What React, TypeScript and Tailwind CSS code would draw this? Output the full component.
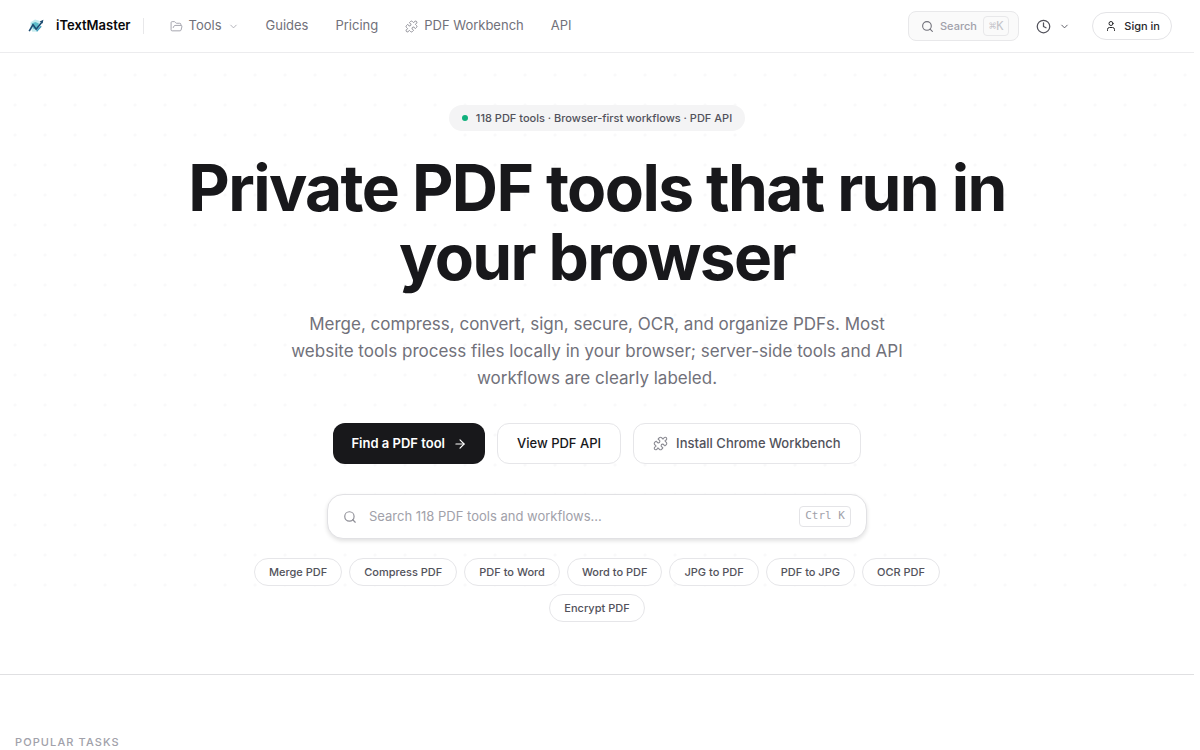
import { ArrowRight, ChevronDown, Clock, FolderOpen, Puzzle, Search, User } from "lucide-react";

const popular = [
  "Merge PDF",
  "Compress PDF",
  "PDF to Word",
  "Word to PDF",
  "JPG to PDF",
  "PDF to JPG",
  "OCR PDF",
  "Encrypt PDF",
];

function Logo() {
  return (
    <svg viewBox="0 0 16 16" className="size-4" aria-hidden="true">
      <path d="M2.6 4.2 7 1.6l4.4 1.2 1 5.6-3 5.2-5 .2-2-4z" fill="#c5ebee" />
      <path d="M3.6 5.4 7.4 4l3.4 1.4-.6 4.4-2.2 1.6-3-1z" fill="#5cbcc9" />
      <path d="M1.2 13.2 5 6.6l3.2 4.6L14 4" fill="none" stroke="#1c4a70" strokeWidth="1.6" strokeLinejoin="round" />
      <path d="m15.4 1.8-3.8 1.8 3 2z" fill="#1c4a70" />
      <path d="m8.6 13.2 4.6-5" stroke="#3a9abb" strokeWidth="1.3" />
    </svg>
  );
}

function Header() {
  return (
    <header className="flex h-[53px] items-center justify-between border-b border-[#ececee] bg-white pl-7 pr-[22px]">
      <div className="flex items-center">
        <a href="#home" className="flex items-center gap-3 text-[13px] font-semibold text-[#09090b]">
          <Logo />
          iTextMaster
        </a>
        <span className="ml-3 h-4 w-px bg-[#e8e8ea]" />
        <nav className="ml-[26px] flex items-center gap-[27px] text-[13px] text-[#71717a]">
          <button type="button" className="flex items-center gap-[6px]">
            <FolderOpen size={13} strokeWidth={1.75} className="text-[#a1a1aa]" />
            Tools
            <ChevronDown size={11} strokeWidth={1.75} className="text-[#a1a1aa]" />
          </button>
          <a href="#guides">Guides</a>
          <a href="#pricing">Pricing</a>
          <a href="#workbench" className="flex items-center gap-[6px]">
            <Puzzle size={13} strokeWidth={1.75} className="text-[#8a8a92]" />
            PDF Workbench
          </a>
          <a href="#api">API</a>
        </nav>
      </div>
      <div className="flex items-center">
        <button
          type="button"
          className="flex h-[30px] items-center gap-[6px] rounded-lg border border-[#e8e8ea] bg-[#fafafa] pl-3 pr-[9px] text-[11px] font-medium text-[#a1a1aa]"
        >
          <Search size={13} className="text-[#71717a]" />
          Search
          <kbd className="flex h-5 items-center rounded border border-[#e8e8ea] px-[5px] font-['DejaVu_Sans_Mono',monospace] text-xs text-[#c4c4c9]">
            ⌘K
          </kbd>
        </button>
        <button type="button" aria-label="Recent" className="ml-[17px] flex items-center gap-2 text-[#52525b]">
          <Clock size={15} />
          <ChevronDown size={11} />
        </button>
        <button
          type="button"
          className="ml-[22px] flex h-7 items-center gap-[7px] rounded-full border border-[#e4e4e7] pl-3 pr-[11px] text-[11px] font-medium text-[#27272a]"
        >
          <User size={12} />
          Sign in
        </button>
      </div>
    </header>
  );
}

function Hero() {
  return (
    <section className="relative border-b border-[#e0e0e2] px-4 pb-[52px] pt-[52px]">
      <div className="absolute inset-x-0 top-[7px] -z-10 h-[540px] bg-[radial-gradient(circle_at_center,#f9f9fa_1px,transparent_2px)] bg-[size:30px_30px]" />
      <div className="flex flex-col items-center">
        <p className="flex h-[26px] items-center gap-2 rounded-full bg-[#f4f4f5] px-[13px] text-[11px] font-medium text-[#52525b]">
          <span className="size-[6px] rounded-full bg-[#10b07c]" />
          118 PDF tools · Browser-first workflows · PDF API
        </p>
        <h1 className="mt-[22px] max-w-[840px] text-center text-[64px] font-bold leading-[69px] tracking-tight text-[#18181b]">
          Private PDF tools that run in your browser
        </h1>
        <p className="mt-5 max-w-[630px] text-center text-[17px] leading-[27px] text-[#71717a]">
          Merge, compress, convert, sign, secure, OCR, and organize PDFs. Most website tools process files locally in
          your browser; server-side tools and API workflows are clearly labeled.
        </p>
        <div className="mt-[31px] flex flex-wrap justify-center gap-3 text-[13px] font-medium">
          <a
            href="#tools"
            className="flex h-[41px] items-center gap-2 rounded-xl bg-[#18181b] px-[18px] font-semibold text-white"
          >
            Find a PDF tool
            <ArrowRight size={14} />
          </a>
          <a
            href="#api"
            className="flex h-[41px] items-center rounded-xl border border-[#e6e6e9] bg-white px-[19px] text-[#18181b]"
          >
            View PDF API
          </a>
          <a
            href="#install"
            className="flex h-[41px] items-center gap-2 rounded-xl border border-[#e6e6e9] bg-white px-[19px] text-[#52525b]"
          >
            <Puzzle size={15} strokeWidth={1.75} className="text-[#8a8a92]" />
            Install Chrome Workbench
          </a>
        </div>
        <label className="mt-[30px] flex h-[45px] w-full max-w-[540px] items-center rounded-2xl border border-[#e1e1e4] bg-white px-[15px] shadow-[0_2px_4px_rgba(0,0,0,0.12)]">
          <Search size={14} className="text-[#8f8f97]" />
          <input
            type="text"
            aria-label="Search PDF tools"
            placeholder="Search 118 PDF tools and workflows..."
            className="ml-[12px] min-w-0 flex-1 text-[13px] outline-none placeholder:text-[#a1a1aa]"
          />
          <kbd className="flex h-[21px] items-center rounded border border-[#e4e4e7] px-[5px] font-['DejaVu_Sans_Mono',monospace] text-[11px] text-[#a1a1aa]">
            Ctrl K
          </kbd>
        </label>
        <ul className="mt-[19px] flex max-w-[720px] flex-wrap justify-center gap-x-[7px] gap-y-2 text-[11px] font-medium text-[#52525b]">
          {popular.map((name) => (
            <li key={name}>
              <a
                href="#tools"
                className="flex h-7 items-center rounded-full border border-[#e6e6e9] bg-white px-[14px]"
              >
                {name}
              </a>
            </li>
          ))}
        </ul>
      </div>
    </section>
  );
}

export default function App() {
  return (
    <div className="isolate min-h-screen bg-white pr-[6px] font-['Inter',sans-serif]">
      <Header />
      <main>
        <Hero />
        <section className="px-[15px] pt-[59px]">
          <h2 className="text-[11px] font-medium uppercase leading-4 tracking-widest text-[#a1a1aa]">Popular tasks</h2>
        </section>
      </main>
    </div>
  );
}
